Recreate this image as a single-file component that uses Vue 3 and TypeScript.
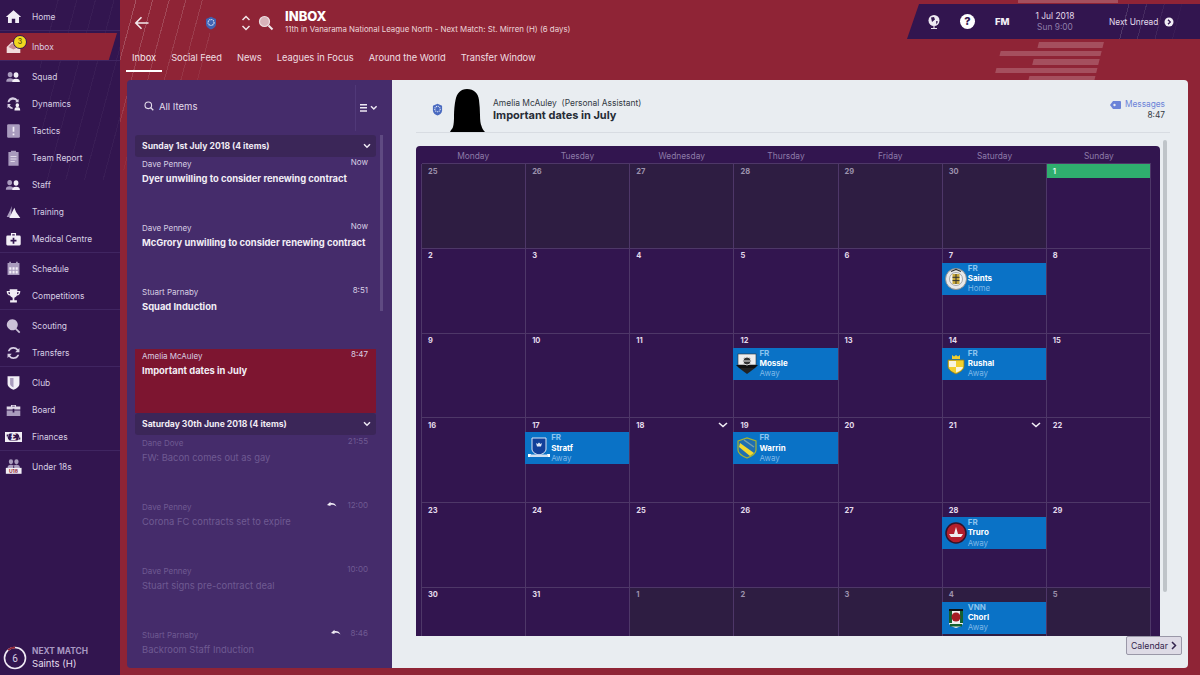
<template>
  <div class="app">
    <aside class="sidebar">
      <div class="side-slashes"></div>
      <nav class="nav">
        <div v-for="group in navGroups" :key="group[0].label" class="nav-group">
          <div v-for="item in group" :key="item.label" class="nav-item" :class="{ active: item.active }">
            <span class="nav-icon">
              <svg viewBox="0 0 20 20" width="20" height="20">
                <path :d="item.d" :fill="item.fill || '#a99bbd'" fill-rule="evenodd" />
                <path v-if="item.d2" :d="item.d2" :fill="item.fill2 || '#f2eef6'" fill-rule="evenodd" />
              </svg>
              <span v-if="item.tag" class="icon-tag" :class="item.tagClass">{{ item.tag }}</span>
              <b v-if="item.active" class="badge">3</b>
            </span>
            <span>{{ item.label }}</span>
          </div>
        </div>
      </nav>
      <div class="next-match">
        <svg class="ring" viewBox="0 0 24 24" width="24" height="24">
          <circle cx="12" cy="12" r="10.5" fill="none" stroke="#efe9f4" stroke-width="1.6" />
          <path d="M5 4.2A10.5 10.5 0 0 1 12 1.5" fill="none" stroke="#8f2436" stroke-width="1.8" />
          <text x="12" y="15.6" text-anchor="middle" font-size="10" fill="#d8cfe4" font-family="Roboto, sans-serif">6</text>
        </svg>
        <div>
          <div class="nm-label">NEXT MATCH</div>
          <div class="nm-team">Saints (H)</div>
        </div>
      </div>
    </aside>

    <main class="main">
      <div class="slashes"></div>
      <div class="bars"><i v-for="b in bars" :key="b.id" :style="{ width: b.w + 'px' }"></i></div>
      <div class="bars-top"></div>

      <header class="header">
        <svg class="back" viewBox="0 0 16 16" width="16" height="16"><path d="M14.5 8H2M7.5 2.2 1.8 8l5.7 5.8" fill="none" stroke="#f2e9ec" stroke-width="1.6" /></svg>
        <svg class="crest-small" viewBox="0 0 12 14" width="12" height="14"><path d="M1 3 6 .7 11 3v5c0 3-2.5 4.500-5 5.500C3.500 12.500 1 11 1 8z" fill="#3f63b4" /><circle cx="6" cy="6.500" r="3" fill="none" stroke="#dfe6f5" stroke-width="1.200" stroke-dasharray="1.200 .8" /></svg>
        <svg class="updown" viewBox="0 0 10 18" width="10" height="18"><path d="M1.500 6 5 2.500 8.500 6M1.500 12 5 15.500 8.500 12" fill="none" stroke="#f1e5e8" stroke-width="1.500" /></svg>
        <svg class="search" viewBox="0 0 16 16" width="16" height="16"><circle cx="6.500" cy="6.500" r="5" fill="#d8b3ba" stroke="#ecdde0" stroke-width="1.200" /><path d="m10.500 10.500 4 4" stroke="#f2e9ec" stroke-width="2" /></svg>
        <div class="titles">
          <h1>INBOX</h1>
          <p>11th in Vanarama National League North - Next Match: St. Mirren (H) (6 days)</p>
        </div>
        <div class="topbar">
          <div class="topbar-slashes"></div>
          <svg viewBox="0 0 14 16" width="14" height="16"><circle cx="7" cy="6.500" r="5.500" fill="#eee9f2" /><path d="M4 3.500 7 3l1 2.500-3 2.500zM9 7l2 .5-1.500 3z" fill="#32154f" /><path d="M4 14.500h6M7 12v2.500" stroke="#e9e3ee" stroke-width="1.200" /></svg>
          <span class="help">?</span>
          <span class="fm">FM</span>
          <div class="date">
            <div>1 Jul 2018</div>
            <div class="time">Sun 9:00</div>
          </div>
          <span class="next-unread">Next Unread</span>
          <svg viewBox="0 0 10 10" width="10" height="10"><circle cx="5" cy="5" r="4.500" fill="#f1edf5" /><path d="M4 2.700 6.300 5 4 7.300" fill="none" stroke="#32154f" stroke-width="1.300" /></svg>
        </div>
      </header>

      <div class="tabs">
        <span v-for="(t, i) in tabs" :key="t" class="tab" :class="{ current: i === 0 }">{{ t }}</span>
      </div>

      <div class="content">
        <section class="list-panel">
          <div class="filter">
            <div class="filter-left">
              <svg viewBox="0 0 10 10" width="10" height="10"><circle cx="4.300" cy="4.300" r="3.300" fill="none" stroke="#e3dcea" stroke-width="1.100" /><path d="m6.800 6.800 2.500 2.500" stroke="#e3dcea" stroke-width="1.300" /></svg>
              <span>All Items</span>
            </div>
            <div class="filter-right">
              <svg viewBox="0 0 18 8" width="18" height="8"><path d="M0 .7h7M0 3.800h7M0 6.900h7" stroke="#eee8f3" stroke-width="1.500" /><path d="m11 2.200 2.800 2.800 2.800-2.800" fill="none" stroke="#eee8f3" stroke-width="1.500" /></svg>
            </div>
          </div>
          <div class="list-scroll"></div>
          <div class="list">
            <template v-for="g in mailGroups" :key="g.title">
              <div class="group-head">
                <span>{{ g.title }}</span>
                <svg viewBox="0 0 8 6" width="8" height="6"><path d="m1 1.200 3 3 3-3" fill="none" stroke="#eee8f3" stroke-width="1.500" /></svg>
              </div>
              <div v-for="m in g.items" :key="m.subject" class="mail" :class="{ selected: m.selected, read: g.read }">
                <div class="mail-top">
                  <span>{{ m.from }}</span>
                  <svg v-if="m.replied" class="reply" viewBox="0 0 10 6" width="10" height="6"><path d="M0 4 3.500 .8v1.400c2.500-.4 5 .6 6 3.300C8 3.800 6 3.500 3.500 3.700V5z" fill="#f2eef6" /></svg>
                  <span class="mail-time">{{ m.time }}</span>
                </div>
                <div class="mail-subject">{{ m.subject }}</div>
              </div>
            </template>
          </div>
        </section>

        <section class="detail">
          <div class="detail-head">
            <svg class="crest-small" viewBox="0 0 12 14" width="11" height="13"><path d="M1 3 6 .7 11 3v5c0 3-2.500 4.500-5 5.500C3.500 12.500 1 11 1 8z" fill="#4a6ac0" /><circle cx="6" cy="6.500" r="3" fill="none" stroke="#dfe6f5" stroke-width="1.200" stroke-dasharray="1.200 .8" /></svg>
            <svg class="silhouette" viewBox="0 0 35 43" width="35" height="43"><path d="M17 0c7 0 11 4 12 11 .6 5 1 10 1 15 0 5 .5 9 1.500 11 .5 2 1.500 4 3.500 6H0c1-2 2.500-3.500 3-5 .8-3 1-6 1-11 0-6 .5-11 1.500-16C7 4 10.500 0 17 0z" fill="#000" /></svg>
            <div class="sender">
              <div class="sender-name">Amelia McAuley&nbsp; (Personal Assistant)</div>
              <div class="sender-title">Important dates in July</div>
            </div>
            <div class="msg-meta">
              <div class="messages">
                <svg viewBox="0 0 11 8" width="11" height="8"><path d="M3 0h7a1 1 0 0 1 1 1v6a1 1 0 0 1-1 1H3L0 4z" fill="#6b83d8" /><circle cx="4.500" cy="4" r="1.200" fill="#e9edf1" /></svg>
                <span>Messages</span>
              </div>
              <div class="msg-time">8:47</div>
            </div>
          </div>

          <div class="detail-body">
            <div class="calendar">
              <div class="weekdays"><span v-for="d in weekdays" :key="d">{{ d }}</span></div>
              <div class="cal-grid">
                <div v-for="c in cells" :key="c.id" class="cell" :class="{ dim: c.dim }">
                  <div class="day" :class="{ today: c.today }">
                    <span>{{ c.n }}</span>
                    <svg v-if="c.more" viewBox="0 0 10 6" width="10" height="6"><path d="m1 1 4 3.500L9 1" fill="none" stroke="#f2eef6" stroke-width="1.600" /></svg>
                  </div>
                  <div v-if="c.fx" class="fixture">
                    <svg class="crest" viewBox="0 0 22 22" width="22" height="22">
                      <g v-if="c.fx.crest === 'saints'"><circle cx="11" cy="11" r="10.500" fill="#e8e8e8" stroke="#8f8f8f" /><circle cx="11" cy="11" r="6.500" fill="#f4f4f4" stroke="#777" stroke-width=".6" /><rect x="7.500" y="6" width="7" height="10" fill="#c9a93c" /><path d="M7.500 9.300h7M7.500 12.600h7M11 6v10" stroke="#333" stroke-width="1" /><path d="M6 3.500 11 1.500l5 2" fill="none" stroke="#333" stroke-width="1.200" /></g>
                      <g v-if="c.fx.crest === 'mossie'"><rect x="2" y="1" width="18" height="11" fill="#eee" stroke="#333" stroke-width=".6" /><path d="M0 12h22l-3 3H3z" fill="#111" /><path d="M3 15h16l-8 6z" fill="#222" /><circle cx="11" cy="8" r="4" fill="#333" stroke="#ddd" /><path d="M8 8h6" stroke="#eee" /></g>
                      <g v-if="c.fx.crest === 'rushal'"><path d="M3 7h16v6c0 4-4 6-8 8-4-2-8-4-8-8z" fill="#f2cf2e" stroke="#8a7720" stroke-width=".8" /><path d="M11 7v7H4V8h7zM11 14h7c-.6 2.500-3.500 4.500-7 5.500z" fill="#f8f4df" /><path d="M7 6V2l2 1.500L11 2l2 1.500L15 2v4z" fill="#f2cf2e" /></g>
                      <g v-if="c.fx.crest === 'stratf'"><path d="M4 1h14v11c0 3-3 5-7 6-4-1-7-3-7-6z" fill="#12409a" stroke="#dde6f5" /><path d="M8 6l1.500 1L11 5.500 12.500 7 14 6l-1 3.500H9z" fill="#dde6f5" /><rect x="0" y="17" width="3" height="3" fill="#fff" /><rect x="19" y="17" width="3" height="3" fill="#fff" /><rect x="2" y="17.500" width="18" height="2.500" fill="#cfe0f2" /></g>
                      <g v-if="c.fx.crest === 'warrin'"><path d="M2 4 11 1l9 3v9c0 4-4 6-9 8-5-2-9-4-9-8z" fill="#1f6fb0" stroke="#a8b430" stroke-width="1.200" /><path d="M4 6 18 16l-4 3L3 10z" fill="#f2d92e" /><path d="M8 3 18 10" stroke="#7aa0a8" stroke-width="1.500" /></g>
                      <g v-if="c.fx.crest === 'truro'"><circle cx="11" cy="11" r="10" fill="#b31f2c" stroke="#32132a" stroke-width="1.500" /><path d="M4 12h14l-2 3H6z" fill="#eee" /><path d="M11 5l2 7H9z" fill="#eee" /></g>
                      <g v-if="c.fx.crest === 'chorl'"><path d="M4 2h14v14c0 2-3 4-7 5-4-1-7-3-7-5z" fill="#eee" /><path d="M4 2h3v14H4zM15 2h3v14h-3z" fill="#14602f" /><path d="M4 2h14v2H4z" fill="#111" /><circle cx="11" cy="10" r="4.500" fill="#a51c24" /><rect x="5" y="17" width="12" height="2.500" fill="#14602f" /></g>
                    </svg>
                    <div class="fx-text">
                      <div class="fx-comp">{{ c.fx.comp }}</div>
                      <div class="fx-team">{{ c.fx.team }}</div>
                      <div class="fx-venue">{{ c.fx.venue }}</div>
                    </div>
                  </div>
                </div>
              </div>
            </div>
            <div class="detail-scroll"></div>
          </div>

          <div class="detail-foot">
            <button class="cal-btn">Calendar <svg viewBox="0 0 6 9" width="6" height="9"><path d="m1 1 3.500 3.500L1 8" fill="none" stroke="#33244d" stroke-width="1.500" /></svg></button>
          </div>
        </section>
      </div>
    </main>
  </div>
</template>

<script setup lang="ts">
interface NavItem {
  label: string
  d: string
  d2?: string
  active?: boolean
  fill?: string
  fill2?: string
  tag?: string
  tagClass?: string
}
interface Mail { from: string; subject: string; time: string; selected?: boolean; replied?: boolean }
interface Fixture { comp: string; team: string; venue: string; crest: string }
interface Cell { id: number; n: number; dim?: boolean; today?: boolean; more?: boolean; fx?: Fixture }

const person = (x: number, y: number, s: number) =>
  `M${x} ${y}a${2.8 * s} ${3.2 * s} 0 1 1 0 ${6.4 * s}a${2.8 * s} ${3.2 * s} 0 1 1 0 ${-6.4 * s}zM${x - 4.5 * s} ${y + 11.500 * s}c0-3 ${1.5 * s}-4 ${4.5 * s}-4s${4.5 * s} 1 ${4.5 * s} 4z`

const navGroups: NavItem[][] = [
  [{ label: 'Home', fill: '#f2eef6', d: 'M10 2 1 10h2.500v7h4.500v-5h4v5h4.500v-7H19z' }],
  [{
    label: 'Inbox', active: true, fill: '#f0dcdc',
    d: 'M2 10 8 4h4l6 6v7H2z', d2: 'M4 10l4-4h3l3 5-4 2z', fill2: '#c98a93',
  }],
  [
    { label: 'Squad', d: person(6, 4, 1), d2: person(13, 4.500, 1) },
    {
      label: 'Dynamics', fill: '#d8cfe4',
      d: 'M9 2a7 7 0 0 1 6 3l1-1v4h-4l1.300-1.500A5 5 0 0 0 5 8H3a7 7 0 0 1 6-6zM3 10h4l-1.500 1.500A5 5 0 0 0 9 14v2a7 7 0 0 1-5-2.500L3 15z',
      d2: person(14.500, 9, .75),
    },
    { label: 'Tactics', d: 'M4 2h12a1.500 1.500 0 0 1 1.500 1.500v13A1.500 1.500 0 0 1 16 18H4a1.500 1.500 0 0 1-1.500-1.500v-13A1.500 1.500 0 0 1 4 2z', d2: 'M9 5h2v6H9zM9 13h2v2H9z' },
    { label: 'Team Report', d: 'M4 3h3V1.500h6V3h3v16H4z', d2: 'M6.500 7.500h7v1.200h-7zM6.500 10.500h7v1.200h-7zM6.500 13.500h5v1.200h-5z', fill2: '#e0d9e8' },
    { label: 'Staff', d: person(5.500, 4, 1), d2: person(13, 4.500, 1) },
    { label: 'Training', d: 'M8 3 6 8l-4 8h5z', d2: 'M11 5l2 5 5 7H5z' },
    { label: 'Medical Centre', fill: '#f2eef6', d: 'M7 3h6v3h4a1.500 1.500 0 0 1 1.500 1.500V16a1.500 1.500 0 0 1-1.500 1.500H3A1.500 1.500 0 0 1 1.500 16V7.500A1.500 1.500 0 0 1 3 6h4zM8.500 4.500V6h3V4.500zM9 8.500V11H6.500v2H9v2.500h2V13h2.500v-2H11V8.500z' },
  ],
  [
    { label: 'Schedule', d: 'M3 3h2V1.500h2V3h6V1.500h2V3h2v14H3z', d2: 'M5 8h2.500v3H5zM8.800 8h2.500v3H8.800zM12.500 8H15v3h-2.500zM5 12.200h2.500v3H5zM8.800 12.200h2.500v3H8.800zM12.500 12.200H15v3h-2.500z' },
    { label: 'Competitions', fill: '#f2eef6', d: 'M5.500 2h9v2H18c0 3.500-1.500 5-4 5.500-.6 1.200-1.500 2-3 2.500v3h3v2.500H6V15h3v-3c-1.500-.5-2.400-1.300-3-2.500C3.500 9 2 7.500 2 4h3.500zM3.800 5.500c.2 1.500.8 2.200 2 2.500V5.500zM16.200 5.500h-2V8c1.200-.3 1.800-1 2-2.500z' },
  ],
  [
    { label: 'Scouting', fill: '#cbc1d8', d: 'M8.500 2a6.500 6.500 0 0 1 5 10.600l4.500 4.500-1.400 1.400-4.500-4.500A6.500 6.500 0 1 1 8.500 2z' },
    { label: 'Transfers', fill: '#d8cfe4', d: 'M10 3a7 7 0 0 1 5.500 2.600L17 4v5h-5l2-1.800A5 5 0 0 0 5.300 8H3.300A7 7 0 0 1 10 3zM3 11h5l-2 1.800A5 5 0 0 0 14.700 12h2A7 7 0 0 1 4.500 14.400L3 16z' },
  ],
  [
    { label: 'Club', fill: '#f2eef6', d: 'M3 2h14v9c0 3.500-3 5.500-7 7-4-1.500-7-3.500-7-7z', d2: 'M6 4v7c0 2 1.500 3.200 4 4.300V4z', fill2: '#a99bbd' },
    { label: 'Board', d: 'M2 10.500h7V13h2v-2.500h7V17H2z', d2: 'M7 4h6v2h5v3.500H11v-1H9v1H2V6h5zM8.500 5v1h3V5z', fill2: '#e0d9e8' },
    { label: 'Finances', fill: '#f2eef6', d: 'M0 4h20v12H0zM2 7v2.500h2V7zM16 10.500V13h2v-2.500zM5.500 6a4.500 4.500 0 0 0 0 8h9a4.500 4.500 0 0 0 0-8z', tag: '£', tagClass: 'pound' },
  ],
  [{ label: 'Under 18s', d: person(7, 1, .9) + person(13.500, 1, .9), d2: 'M1 11h18.500v7H1z', tag: 'U18', tagClass: 'u18' }],
]

const tabs = ['Inbox', 'Social Feed', 'News', 'Leagues in Focus', 'Around the World', 'Transfer Window']
const bars = [65, 101, 66, 101, 66].map((w, id) => ({ id, w }))

const mailGroups: { title: string; read?: boolean; items: Mail[] }[] = [
  {
    title: 'Sunday 1st July 2018 (4 items)',
    items: [
      { from: 'Dave Penney', subject: 'Dyer unwilling to consider renewing contract', time: 'Now' },
      { from: 'Dave Penney', subject: 'McGrory unwilling to consider renewing contract', time: 'Now' },
      { from: 'Stuart Parnaby', subject: 'Squad Induction', time: '8:51' },
      { from: 'Amelia McAuley', subject: 'Important dates in July', time: '8:47', selected: true },
    ],
  },
  {
    title: 'Saturday 30th June 2018 (4 items)',
    read: true,
    items: [
      { from: 'Dane Dove', subject: 'FW: Bacon comes out as gay', time: '21:55' },
      { from: 'Dave Penney', subject: 'Corona FC contracts set to expire', time: '12:00', replied: true },
      { from: 'Dave Penney', subject: 'Stuart signs pre-contract deal', time: '10:00' },
      { from: 'Stuart Parnaby', subject: 'Backroom Staff Induction', time: '8:46', replied: true },
    ],
  },
]

const weekdays = ['Monday', 'Tuesday', 'Wednesday', 'Thursday', 'Friday', 'Saturday', 'Sunday']

const fixtures: Record<number, Fixture> = {
  12: { comp: 'FR', team: 'Saints', venue: 'Home', crest: 'saints' },
  17: { comp: 'FR', team: 'Mossle', venue: 'Away', crest: 'mossie' },
  19: { comp: 'FR', team: 'Rushal', venue: 'Away', crest: 'rushal' },
  22: { comp: 'FR', team: 'Stratf', venue: 'Away', crest: 'stratf' },
  24: { comp: 'FR', team: 'Warrin', venue: 'Away', crest: 'warrin' },
  33: { comp: 'FR', team: 'Truro', venue: 'Away', crest: 'truro' },
  40: { comp: 'VNN', team: 'Chorl', venue: 'Away', crest: 'chorl' },
}

// 25 Jun .. 5 Aug, index counted from the first cell
const cells: Cell[] = Array.from({ length: 42 }, (_, id) => {
  const dim = id < 6 || id > 36
  const n = id < 6 ? 25 + id : id < 37 ? id - 5 : id - 36
  return { id, n, dim, today: id === 6, more: id === 23 || id === 26, fx: fixtures[id] }
})
</script>

<style>
html, body { margin: 0; background: #8f2436; overflow: hidden; }
</style>

<style scoped>
.app {
  width: 1200px; height: 675px;
  display: flex;
  overflow: hidden;
  font-family: Inter, Roboto, "Liberation Sans", sans-serif;
  color: #fff;
}
.sidebar {
  width: 120px; flex: none;
  background: #32154f;
  display: flex; flex-direction: column;
  padding-top: 3px; box-sizing: border-box;
  position: relative;
}
.side-slashes {
  position: absolute; left: 40px; top: 0; width: 80px; height: 180px;
  background: repeating-linear-gradient(105deg, transparent 0 17px, rgba(255,255,255,.035) 17px 18px);
}
.nav { position: relative; }
.nav-group { border-bottom: 1px solid #402561; margin-bottom: 2px; }
.nav-group:last-child { border-bottom: none; }
.nav-item {
  height: 27px;
  display: flex; align-items: center; gap: 10px;
  padding-left: 5px;
  font-size: 8.400px;
  color: #d8cfe4;
}
.nav-item.active {
  background: #8f2436;
  width: 117px; box-sizing: border-box;
  clip-path: polygon(0 0, 100% 0, 93% 100%, 0 100%);
}
.nav-icon { position: relative; width: 17px; height: 20px; display: flex; align-items: center; justify-content: center; }
.badge {
  position: absolute; left: 8px; top: -2px;
  width: 14px; height: 14px; border-radius: 50%;
  background: #f1d91f; border: 1px solid #32154f; box-sizing: border-box;
  color: #5a4a10; font-size: 7px; font-weight: 500; text-align: center; line-height: 12px;
}
.icon-tag { position: absolute; left: 0; right: 0; text-align: center; }
.u18 { bottom: 3px; font-size: 5px; line-height: 6px; font-weight: 700; color: #8f2436; }
.pound { top: 5px; font-size: 8.500px; line-height: 10px; font-weight: 800; color: #f2eef6; }
.next-match {
  margin-top: auto;
  height: 34px;
  padding-left: 3px;
  display: flex; align-items: center; gap: 5px;
  position: relative;
}
.ring { flex: none; }
.nm-label { font-size: 8.400px; line-height: 11px; font-weight: 700; color: #a898c2; }
.nm-team { font-size: 9.600px; line-height: 12px; color: #e4dcec; margin-top: 1px; }

.main {
  flex: 1; min-width: 0;
  position: relative;
  display: flex; flex-direction: column;
  background: #8f2436;
}
.slashes {
  position: absolute; left: 0; top: 0; width: 90px; height: 170px;
  background: repeating-linear-gradient(105deg, transparent 0 15px, rgba(255,255,255,.24) 15px 16px);
  -webkit-mask-image: linear-gradient(135deg, #000, transparent 78%);
  mask-image: linear-gradient(135deg, #000, transparent 78%);
}
.bars {
  position: absolute; left: 869px; top: 42px;
  display: flex; flex-direction: column; align-items: flex-end; gap: 3px;
  width: 110px;
  transform: skewX(-14deg);
}
.bars i { display: block; height: 5.500px; background: rgba(255,255,255,.2); }
.bars-top { position: absolute; left: 898px; top: 0; width: 100px; height: 3px; background: rgba(255,255,255,.2); }
.header {
  height: 45px;
  display: flex; align-items: center;
  position: relative;
  padding-left: 14px;
}
.back { flex: none; }
.header > .crest-small { margin-left: 55px; }
.updown { margin-left: 24px; }
.search { margin-left: 7px; }
.titles { margin-left: 11px; margin-top: -3px; }
.titles h1 { margin: 0; font-size: 13px; font-weight: 800; line-height: 16px; color: #fff; }
.titles p { margin: 0; font-size: 7.870px; line-height: 11px; color: #ecd5d9; white-space: nowrap; }
.topbar {
  position: absolute; left: 787px; top: 4px;
  width: 293px; height: 35px;
  background: #32154f;
  clip-path: polygon(12px 0, 100% 0, 100% 100%, 0 100%);
  display: flex; align-items: center;
  padding-left: 20px; box-sizing: border-box;
}
.topbar-slashes {
  position: absolute; left: 205px; top: 0; right: 0; bottom: 0;
  background: repeating-linear-gradient(105deg, transparent 0 16px, rgba(255,255,255,.16) 16px 17px);
  -webkit-mask-image: linear-gradient(90deg, #000, transparent 90%);
  mask-image: linear-gradient(90deg, #000, transparent 90%);
}
.help {
  margin-left: 19px;
  width: 15px; height: 15px; border-radius: 50%;
  background: #fff; color: #32154f;
  font-size: 11px; font-weight: 800; text-align: center; line-height: 15px;
}
.fm { margin-left: 20px; font-size: 9.500px; font-weight: 800; color: #f2eef6; width: 16px; }
.date { margin-left: 24px; font-size: 8.400px; line-height: 11px; text-align: center; color: #e4dcec; width: 40px; white-space: nowrap; }
.time { color: #8f7eaa; }
.next-unread { margin-left: 34px; font-size: 8.300px; color: #e4dcec; margin-right: 6px; white-space: nowrap; position: relative; }

.tabs {
  height: 35px; box-sizing: border-box;
  display: flex; gap: 15px;
  padding: 3px 0 0 12px;
  font-size: 9.300px;
  position: relative;
}
.tab { color: #efdfe2; height: 23px; line-height: 20px; }
.tab.current { border-bottom: 2px solid #fff; padding: 0 6px; margin: 0 -6px; color: #f4e8ea; box-sizing: content-box; height: 22px; }

.content {
  flex: 1; min-height: 0;
  display: flex;
  margin: 0 12px 7px 7px;
  position: relative;
}
.list-panel {
  width: 265px; flex: none;
  background: #452c6b;
  border-radius: 4px 0 0 4px;
  position: relative;
  overflow: hidden;
  display: flex; flex-direction: column;
}
.filter {
  height: 55px; flex: none;
  display: flex;
  align-items: center; justify-content: space-between;
  box-sizing: border-box;
}
.filter-left { display: flex; align-items: center; gap: 5px; padding: 0 0 3px 17px; font-size: 9.500px; color: #e3dcea; }
.filter-right { height: 46px; width: 37px; border-left: 1px solid #503878; display: flex; align-items: center; padding-left: 4px; box-sizing: border-box; }
.list-scroll { position: absolute; left: 253px; top: 55px; width: 3px; height: 176px; background: #5f4a82; }
.list { padding: 0 16px 0 8px; }
.group-head {
  height: 22px;
  background: #3b2658;
  border-radius: 3px;
  display: flex; align-items: center; justify-content: space-between;
  padding: 0 5px 0 7px;
  font-size: 8.600px; font-weight: 700; color: #f0ebf4;
}
.mail {
  height: 64px; box-sizing: border-box;
  padding: 1px 8px 0 7px;
}
.mail-top { display: flex; align-items: flex-start; font-size: 8px; line-height: 11px; color: #d8cfe4; }
.mail-top > span:first-child { flex: 1; margin-top: 1px; }
.mail-time { margin-left: 10px; margin-top: -1px; }
.mail-subject { font-size: 9.400px; font-weight: 700; line-height: 13px; margin-top: 2px; color: #f2eef6; white-space: nowrap; }
.mail.selected { background: #7d1530; }
.mail.read { padding-top: 2px; }
.mail.read .mail-top { color: #6f5a92; }
.mail.read .mail-subject { color: #6f5a92; font-weight: 400; }

.detail {
  flex: 1; min-width: 0;
  background: #e9edf1;
  border-radius: 0 4px 4px 0;
  display: flex; flex-direction: column;
  overflow: hidden;
}
.detail-head {
  height: 53px; flex: none; box-sizing: border-box;
  margin: 0 18px 0 24px;
  border-bottom: 1px solid #d8dce2;
  display: flex; align-items: flex-end;
  position: relative;
}
.detail-head > .crest-small { margin: 0 7px 16px 16px; }
.silhouette { flex: none; display: block; }
.sender { margin: 0 0 10px 8px; }
.sender-name { font-size: 8.450px; line-height: 11px; color: #333a44; }
.sender-title { font-size: 11px; line-height: 13px; font-weight: 700; color: #262c36; }
.msg-meta { margin-left: auto; margin-bottom: 11px; margin-right: 5px; text-align: right; font-size: 8.300px; }
.messages { display: flex; align-items: center; justify-content: flex-end; gap: 4px; color: #6b83d8; line-height: 11px; }
.msg-time { color: #333a44; line-height: 11px; }
.detail-body {
  flex: 1; min-height: 0;
  display: flex;
  padding: 13px 0 0 24px;
  position: relative;
}
.calendar {
  width: 744px; height: 490px; flex: none;
  background: #32154f;
  border-radius: 4px 4px 0 0;
  overflow: hidden;
  box-sizing: border-box;
  padding: 0 9px 0 5px;
}
.weekdays {
  height: 18px;
  display: grid; grid-template-columns: repeat(7, 1fr);
  text-align: center;
  font-size: 8.400px; line-height: 21px; color: #8d7ba8;
}
.cal-grid {
  display: grid;
  grid-template-columns: repeat(7, 1fr);
  grid-auto-rows: 84.750px;
  border-left: 1px solid #4e3768;
}
.cell {
  border-right: 1px solid #4e3768;
  border-bottom: 1px solid #4e3768;
  border-top: 1px solid #4e3768;
  margin-top: -1px;
  box-sizing: border-box;
  position: relative;
  min-width: 0;
}
.cell.dim { background: #2e1d42; }
.day {
  height: 14px;
  display: flex; align-items: center; justify-content: space-between;
  padding: 0 5px 0 6px;
  font-size: 7.500px; font-weight: 700; color: #e4dcec;
}
.cell.dim .day { color: #9d92ad; }
.day.today { background: #2fae6e; color: #dff5e8; }
.fixture {
  height: 32px; margin-left: -1px;
  background: #0a72c6;
  display: flex; align-items: center; gap: 1px;
  padding-left: 3px;
}
.crest { flex: none; }
.fx-text { font-size: 8px; line-height: 10.300px; margin-top: -1px; }
.fx-comp { color: #8cc4ef; font-weight: 700; }
.fx-team { color: #fff; font-weight: 700; }
.fx-venue { color: #7fb8e8; }
.detail-scroll { width: 4px; height: 452px; margin: -6px 0 0 3px; background: #bfc4c9; border-radius: 2px; flex: none; }
.detail-foot {
  height: 32px; flex: none;
  display: flex; justify-content: flex-end; align-items: flex-start;
  padding: 2px 6px 0 0;
}
.cal-btn {
  height: 19px; width: 56px; padding: 0;
  border: 1px solid #9a98a8; border-radius: 2px;
  background: #dedbe6;
  font: 8.700px Inter, Roboto, sans-serif; color: #33244d;
  display: flex; align-items: center; justify-content: center; gap: 3px;
}
</style>
